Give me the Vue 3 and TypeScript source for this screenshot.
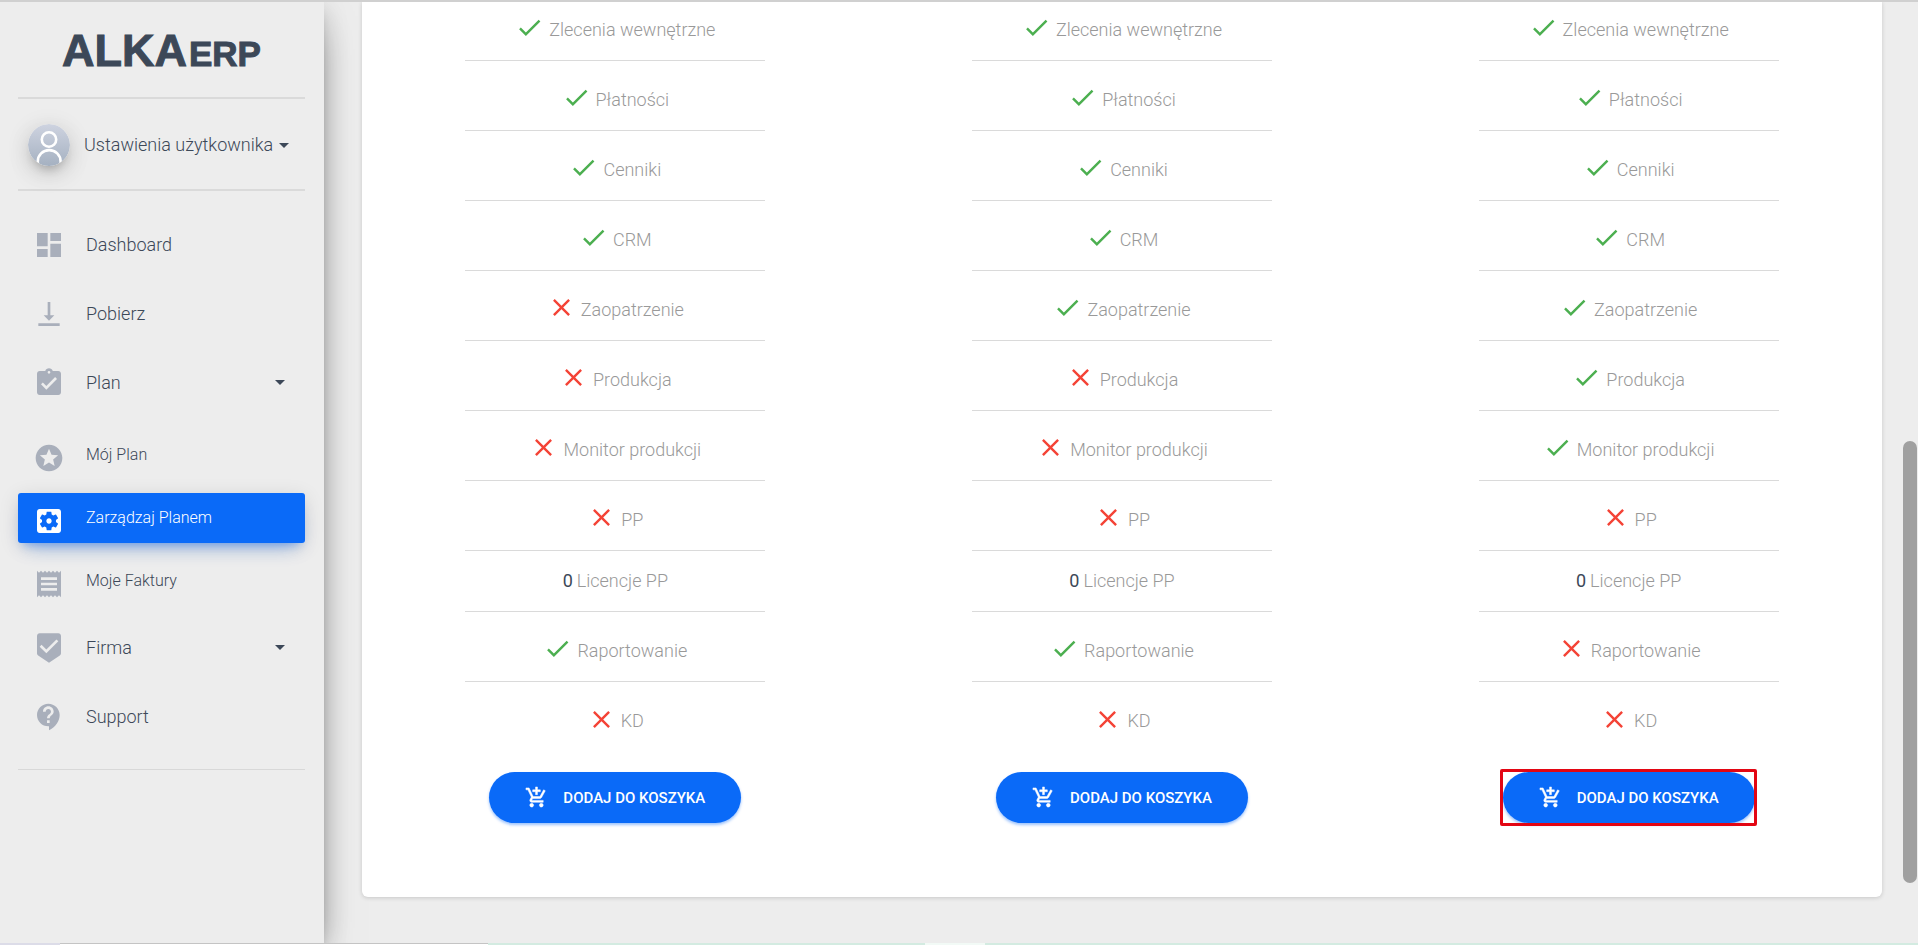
<script setup lang="ts">
type Mark = 'yes' | 'no' | 'count'
interface Feature { label: string; mark: Mark }
interface PlanColumn { id: number; highlighted: boolean; features: Feature[] }
interface NavItem { label: string; icon: string; expandable?: boolean; active?: boolean; children?: NavItem[] }

const icons: Record<string, string> = {
  dashboard: 'M3 13h8V3H3v10zm0 8h8v-6H3v6zm10 0h8V11h-8v10zm0-18v6h8V3h-8z',
  download: 'M16 13h-3V3h-2v10H8l4 4 4-4zM4 19v2h16v-2H4z',
  assignment: 'M19 3h-4.18C14.4 1.84 13.3 1 12 1s-2.4.84-2.82 2H5c-1.1 0-2 .9-2 2v14c0 1.100.9 2 2 2h14c1.100 0 2-.9 2-2V5c0-1.100-.9-2-2-2zm-7 0c.55 0 1 .45 1 1s-.45 1-1 1-1-.45-1-1 .45-1 1-1zm-2 14l-4-4 1.410-1.410L10 14.170l6.590-6.590L18 9l-8 8z',
  stars: 'M11.990 2C6.470 2 2 6.480 2 12s4.470 10 9.990 10C17.520 22 22 17.520 22 12S17.520 2 11.990 2zm4.240 16L12 15.450 7.770 18l1.120-4.810-3.730-3.230 4.920-.42L12 5l1.920 4.530 4.920.42-3.730 3.230L16.230 18z',
  settings: 'M12 10c-1.100 0-2 .9-2 2s.9 2 2 2 2-.9 2-2-.9-2-2-2zm7-7H5c-1.110 0-2 .9-2 2v14c0 1.100.89 2 2 2h14c1.110 0 2-.9 2-2V5c0-1.100-.89-2-2-2zm-1.750 9c0 .23-.02.46-.05.68l1.480 1.160c.13.11.17.3.08.45l-1.400 2.420c-.09.15-.27.21-.43.15l-1.740-.7c-.36.28-.76.51-1.180.69l-.26 1.850c-.03.17-.18.3-.35.3h-2.800c-.17 0-.32-.13-.35-.29l-.26-1.850c-.43-.18-.82-.41-1.180-.69l-1.740.7c-.16.06-.34 0-.43-.15l-1.400-2.420c-.09-.15-.05-.34.08-.45l1.480-1.160c-.03-.23-.05-.46-.05-.69s.02-.46.05-.68l-1.480-1.160c-.13-.11-.17-.3-.08-.45l1.400-2.420c.09-.15.27-.21.43-.15l1.740.7c.36-.28.76-.51 1.180-.69l.26-1.850c.03-.17.18-.3.35-.3h2.800c.17 0 .32.13.35.29l.26 1.850c.43.18.82.41 1.180.69l1.740-.7c.16-.06.34 0 .43.15l1.400 2.420c.09.15.05.34-.08.45l-1.480 1.160c.03.23.05.46.05.69z',
  receipt: 'M18 17H6v-2h12v2zm0-4H6v-2h12v2zm0-4H6V7h12v2zM3 22l1.500-1.500L6 22l1.500-1.500L9 22l1.500-1.500L12 22l1.500-1.500L15 22l1.500-1.500L18 22l1.500-1.500L21 22V2l-1.500 1.500L18 2l-1.500 1.500L15 2l-1.500 1.500L12 2l-1.500 1.500L9 2 7.500 3.500 6 2 4.500 3.500 3 2v20z',
  beenhere: 'M19 1H5c-1.100 0-1.990.9-1.990 2L3 15.930c0 .69.35 1.300.88 1.660L12 23l8.110-5.410c.53-.36.88-.97.88-1.660L21 3c0-1.100-.9-2-2-2zm-9 15l-5-5 1.410-1.410L10 13.170l7.590-7.590L19 7l-9 9z',
  support: 'M11.500 2C6.810 2 3 5.810 3 10.500S6.810 19 11.500 19h.5v3c4.860-2.340 8-7 8-11.500C20 5.810 16.190 2 11.500 2zm1 14.500h-2v-2h2v2zm0-3.500h-2c0-3.250 3-3 3-5 0-1.100-.9-2-2-2s-2 .9-2 2h-2c0-2.210 1.790-4 4-4s4 1.790 4 4c0 2.500-3 2.750-3 5z',
  yes: 'M9 16.170L4.830 12l-1.420 1.410L9 19 21 7l-1.410-1.410z',
  no: 'M19 6.410L17.590 5 12 10.590 6.410 5 5 6.410 10.590 12 5 17.590 6.410 19 12 13.410 17.590 19 19 17.590 13.410 12z',
  cart: 'M11 9h2V6h3V4h-3V1h-2v3H8v2h3v3zm-4 9c-1.100 0-1.990.9-1.990 2S5.900 22 7 22s2-.9 2-2-.9-2-2-2zm10 0c-1.100 0-1.990.9-1.990 2s.89 2 1.990 2 2-.9 2-2-.9-2-2-2zm-9.830-3.250l.03-.12.9-1.630h7.450c.75 0 1.410-.41 1.750-1.030l3.860-7.010L19.420 4h-.01l-1.100 2-2.760 5H8.530l-.13-.27L6.160 6l-.95-2-.94-2H1v2h2l3.600 7.590-1.350 2.450c-.16.28-.25.61-.25.96 0 1.100.9 2 2 2h12v-2H7.420c-.13 0-.25-.11-.25-.25z',
}

const nav: NavItem[] = [
  { label: 'Dashboard', icon: 'dashboard' },
  { label: 'Pobierz', icon: 'download' },
  {
    label: 'Plan', icon: 'assignment', expandable: true,
    children: [
      { label: 'Mój Plan', icon: 'stars' },
      { label: 'Zarządzaj Planem', icon: 'settings', active: true },
      { label: 'Moje Faktury', icon: 'receipt' },
    ],
  },
  { label: 'Firma', icon: 'beenhere', expandable: true },
  { label: 'Support', icon: 'support' },
]

const labels = ['Zlecenia wewnętrzne', 'Płatności', 'Cenniki', 'CRM', 'Zaopatrzenie', 'Produkcja',
  'Monitor produkcji', 'PP', 'Licencje PP', 'Raportowanie', 'KD']
const marks: Record<string, Mark> = { y: 'yes', n: 'no', c: 'count' }
const column = (id: number, codes: string, highlighted = false): PlanColumn => ({
  id, highlighted,
  features: labels.map((label, i) => ({ label, mark: marks[codes[i]] })),
})
const plans: PlanColumn[] = [
  column(1, 'yyyynnnncyn'),
  column(2, 'yyyyynnncyn'),
  column(3, 'yyyyyyyncnn', true),
]
</script>

<template>
  <div class="page">
    <div class="topline"></div>
    <div class="shell">
      <aside class="sidebar">
        <a href="#" class="logo">ALKA<span class="logo-small">ERP</span></a>
        <a href="#" class="user">
          <svg class="avatar" viewBox="0 0 42 42" aria-hidden="true">
            <defs>
              <linearGradient id="avatar-fill" x1="0" y1="0" x2="0" y2="1">
                <stop offset="0" stop-color="#ced3e0" />
                <stop offset="1" stop-color="#a5b1c1" />
              </linearGradient>
              <clipPath id="avatar-clip"><circle cx="21" cy="21" r="21" /></clipPath>
            </defs>
            <circle cx="21" cy="21" r="21" fill="url(#avatar-fill)" />
            <g clip-path="url(#avatar-clip)" fill="none" stroke="#fff" stroke-width="2.600">
              <circle cx="21" cy="15.500" r="7.200" />
              <path d="M9.800 39v-1.500a11.400 11.400 0 0 1 22.800 0V39" stroke-linecap="round" />
            </g>
          </svg>
          <span>Ustawienia użytkownika</span>
          <span class="caret"></span>
        </a>
        <nav class="nav">
          <ul class="nav-list">
            <li v-for="item in nav" :key="item.label">
              <a href="#" class="nav-link">
                <svg class="nav-icon" viewBox="0 0 24 24" aria-hidden="true"><path :d="icons[item.icon]" /></svg>
                <span class="nav-label">{{ item.label }}</span>
                <span v-if="item.expandable" class="caret"></span>
              </a>
              <ul v-if="item.children" class="sub-list">
                <li v-for="child in item.children" :key="child.label">
                  <a href="#" class="sub-link" :class="{ active: child.active }">
                    <svg class="nav-icon sub-icon" viewBox="0 0 24 24" aria-hidden="true"><path :d="icons[child.icon]" /></svg>
                    <span>{{ child.label }}</span>
                  </a>
                </li>
              </ul>
            </li>
          </ul>
        </nav>
      </aside>

      <main class="content">
        <section class="card">
          <div v-for="plan in plans" :key="plan.id" class="plan">
            <ul class="features">
              <li v-for="f in plan.features" :key="f.label" class="feature" :class="{ compact: f.mark === 'count' }">
                <b v-if="f.mark === 'count'">0</b>
                <svg v-else class="mark" :class="f.mark" viewBox="0 0 24 24" aria-hidden="true"><path :d="icons[f.mark]" /></svg>
                <span>{{ f.label }}</span>
              </li>
            </ul>
            <div class="action" :class="{ highlighted: plan.highlighted }">
              <button type="button" class="buy">
                <svg class="cart" viewBox="0 0 24 24" aria-hidden="true"><path :d="icons.cart" /></svg>
                <span>DODAJ DO KOSZYKA</span>
              </button>
            </div>
          </div>
        </section>
      </main>
      <div class="track"><div class="thumb"></div></div>
    </div>
    <div class="strip">
      <span class="strip-start"></span><span class="strip-tab"></span><span class="strip-mid"></span><span class="strip-gap"></span><span class="strip-end"></span>
    </div>
  </div>
</template>

<style>
body {
  margin: 0;
  background: #ededed;
}
</style>

<style scoped>
.page {
  display: flex;
  flex-direction: column;
  height: 100vh;
  overflow: hidden;
  background: #ededed;
  font-family: Roboto, "Noto Sans", sans-serif;
  font-weight: 300;
  font-size: 18px;
  line-height: 28px;
  color: #3c4858;
}
ul {
  list-style: none;
  margin: 0;
  padding: 0;
}
a {
  color: inherit;
  text-decoration: none;
}
.topline {
  height: 2px;
  background: #d0d0d0;
  flex: none;
  position: relative;
  z-index: 2;
}
.shell {
  display: flex;
  flex: 1;
  min-height: 0;
}
.sidebar {
  box-sizing: border-box;
  width: 324px;
  flex: none;
  padding: 0 19px 0 18px;
  background: #ededed;
  box-shadow: 0 16px 38px -12px rgba(0, 0, 0, 0.56), 0 4px 25px 0 rgba(0, 0, 0, 0.12), 0 8px 10px -5px rgba(0, 0, 0, 0.2);
}
.logo {
  display: block;
  height: 95px;
  line-height: 98px;
  padding-left: 44px;
  font-family: "Liberation Sans", Arial, sans-serif;
  font-weight: 700;
  font-size: 45px;
  white-space: nowrap;
  -webkit-text-stroke: 1px #3c4858;
}
.logo-small {
  margin-left: 2px;
  font-size: 35px;
}
.user {
  box-sizing: border-box;
  display: flex;
  align-items: center;
  height: 94px;
  padding: 2px 0 0 10px;
  border-top: 2px solid #dadada;
  border-bottom: 2px solid #dadada;
  white-space: nowrap;
}
.avatar {
  width: 42px;
  height: 42px;
  margin-right: 14px;
  border-radius: 50%;
  box-shadow: 0 10px 30px -12px rgba(0, 0, 0, 0.42), 0 4px 25px 0 rgba(0, 0, 0, 0.12), 0 8px 10px -5px rgba(0, 0, 0, 0.2);
}
.caret {
  border: 5px solid transparent;
  border-top-color: #3c4858;
  border-bottom: 0;
}
.user .caret {
  margin-left: 6px;
}
.nav {
  padding: 26px 0 25px;
  border-bottom: 1px solid #d8d8d8;
}
.nav-list {
  display: grid;
  gap: 14px;
}
.nav-link {
  display: flex;
  align-items: center;
  height: 55px;
  padding: 0 20px 0 15px;
}
.nav-icon {
  width: 32px;
  height: 32px;
  margin-right: 21px;
  fill: #a9afbb;
}
.nav-label {
  flex: 1;
}
.sub-list {
  display: grid;
  gap: 13px;
  margin-top: 20px;
}
.sub-link {
  display: flex;
  align-items: center;
  height: 50px;
  padding-left: 15px;
  border-radius: 3px;
  font-size: 16px;
}
.sub-icon {
  margin-top: 6px;
}
.active {
  color: #fff;
  background: #0a6af8;
  box-shadow: 0 12px 20px -10px rgba(10, 106, 248, 0.4), 0 4px 20px 0 rgba(0, 0, 0, 0.12), 0 7px 8px -5px rgba(10, 106, 248, 0.3);
}
.active .nav-icon {
  fill: #fff;
}
.content {
  flex: 1;
  min-width: 0;
  padding: 0 20px 0 38px;
}
.card {
  position: relative;
  display: grid;
  grid-template-columns: repeat(3, 1fr);
  padding-bottom: 74px;
  overflow: hidden;
  background: #fff;
  border-radius: 0 0 6px 6px;
  box-shadow: 0 1px 4px 0 rgba(0, 0, 0, 0.16);
}
.plan {
  display: flex;
  flex-direction: column;
  align-items: center;
}
.features {
  width: 300px;
  margin-top: -11px;
}
.feature {
  box-sizing: border-box;
  display: flex;
  align-items: center;
  justify-content: center;
  gap: 5px;
  height: 70px;
  padding-top: 8px;
  border-bottom: 1px solid #dadada;
  color: #999;
}
.feature:last-child {
  border-bottom: 0;
}
.compact {
  gap: 4px;
  height: 61px;
  padding-top: 0;
}
.feature b {
  font-weight: 400;
  color: #3c4858;
}
.mark {
  width: 29px;
  height: 29px;
  margin-bottom: 4px;
}
.yes {
  fill: #4caf50;
}
.no {
  fill: #f44336;
}
.action {
  position: relative;
  margin-top: 20px;
}
.highlighted::after {
  content: "";
  position: absolute;
  inset: -3px -2px -3px -3px;
  border: 3px solid #e30613;
  border-radius: 2px;
  pointer-events: none;
}
.buy {
  display: flex;
  align-items: center;
  justify-content: center;
  gap: 15px;
  width: 252px;
  height: 51px;
  padding: 0;
  border: 0;
  border-radius: 26px;
  background: #0a6af8;
  box-shadow: 0 2px 3px 0 rgba(10, 106, 248, 0.4);
  color: #fff;
  font-family: inherit;
  font-weight: 500;
  font-size: 15px;
  line-height: 20px;
}
.cart {
  width: 23px;
  height: 23px;
  fill: #fff;
  stroke: #fff;
  stroke-width: 0.5;
}
.track {
  flex: none;
  width: 14px;
  padding: 0 1px;
}
.thumb {
  height: 47%;
  margin-top: 439px;
  border-radius: 7px;
  background: #a0a0a0;
}
.strip {
  display: flex;
  flex: none;
  height: 2px;
  position: relative;
  z-index: 2;
}
.strip-start {
  width: 60px;
  background: #dcdce8;
}
.strip-tab {
  width: 428px;
  box-sizing: border-box;
  border-top: 1px solid #c4c4c4;
  background: #fff;
}
.strip-mid {
  width: 437px;
  background: #d3ebe1;
}
.strip-gap {
  width: 60px;
  background: #f2faf6;
}
.strip-end {
  flex: 1;
  background: #d3ebe1;
}
</style>
